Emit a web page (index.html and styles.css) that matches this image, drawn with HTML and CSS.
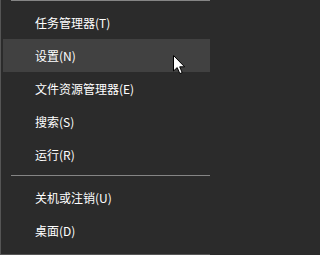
FILE: index.html
```html
<!DOCTYPE html>
<html lang="zh-CN">
<head>
<meta charset="utf-8">
<link rel="stylesheet" href="styles.css">
</head>
<body>
<div class="menu">
  <div class="sep sep-top"></div>
  <ul class="group">
    <li class="item">任务管理器(T)</li>
    <li class="item item-hover">设置(N)</li>
    <li class="item">文件资源管理器(E)</li>
    <li class="item">搜索(S)</li>
    <li class="item">运行(R)</li>
  </ul>
  <div class="sep sep-mid"></div>
  <ul class="group">
    <li class="item">关机或注销(U)</li>
    <li class="item">桌面(D)</li>
  </ul>
  <svg class="cursor" width="13" height="20" viewBox="0 0 13 20">
    <path d="M0.5 0.5 L0.5 16 L4.2 12.6 L6.8 18.6 L9.2 17.6 L6.7 11.8 L11.6 11.8 Z" fill="#ffffff" stroke="#000000" stroke-width="1" stroke-linejoin="miter"/>
  </svg>
</div>
</body>
</html>
```
FILE: styles.css
```css
html, body {
  margin: 0;
  padding: 0;
  background: #2b2b2b;
}
.menu {
  position: relative;
  width: 209px;
  height: 254px;
  background: #2b2b2b;
  border-left: 1px solid #555555;
  border-bottom: 1px solid #555555;
  font-family: "Noto Sans CJK SC", "Noto Sans", sans-serif;
  font-size: 12px;
  color: #ffffff;
  overflow: hidden;
}
.sep {
  height: 1px;
  background: #858585;
  margin-left: 10px;
}
.sep-top {
  margin-top: 0;
  margin-bottom: 5px;
}
.sep-mid {
  margin-top: 4px;
  margin-bottom: 5px;
}
.group {
  list-style: none;
  margin: 0;
  padding: 0;
}
.item {
  height: 33px;
  line-height: 34px;
  margin-left: 2px;
  padding-left: 32px;
  white-space: nowrap;
}
.item-hover {
  background: #414141;
}
.cursor {
  position: absolute;
  left: 172px;
  top: 55px;
}
```
